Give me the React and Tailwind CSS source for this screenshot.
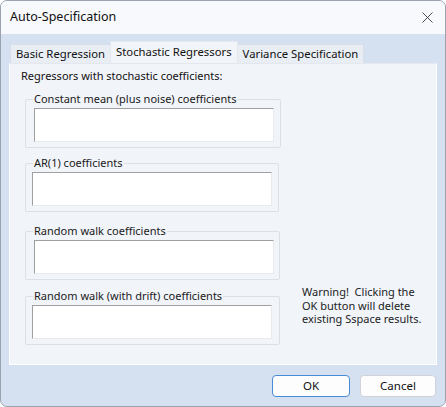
import { X } from 'lucide-react';

const groups = [
    { label: 'Constant mean (plus noise) coefficients', w: 'w-[256px]', box: 'ml-[8px]', mt: 'mt-[15px]' },
    { label: 'AR(1) coefficients', w: 'w-[254px]', box: 'ml-[6px]', mt: 'mt-[15px]' },
    { label: 'Random walk coefficients', w: 'w-[255px]', box: 'ml-[8px]', mt: 'mt-[19px]' },
    { label: 'Random walk (with drift) coefficients', w: 'w-[255px]', box: 'ml-[6px]', mt: 'mt-[16px]' },
];

const GroupBox = ({ label, w, box, mt }) => (
    <div className={`${w} ${mt} h-[49px] border border-[#dcdfe4] rounded-[2px] relative`}>
        <span className="absolute -top-[9px] left-[7px] px-[1px] bg-[#f1f4f9] leading-[16px] text-[#1a1a1a] whitespace-nowrap">{label}</span>
        <div className={`${box} mt-[8px] w-[240px] h-[34px] bg-white border-t border-l border-[#a0a0a0] border-b border-r border-b-[#e8eaee] border-r-[#e8eaee]`}></div>
    </div>
);

const App = () => {
    return (
        <div className="w-[446px] h-[407px] bg-white text-[11px] text-[#111]" style={{ fontFamily: '"Noto Sans", "Open Sans", sans-serif' }}>
            <div className="w-full h-full rounded-[7px] border border-[#9aa3ae] overflow-hidden flex flex-col bg-[#d5e1f0]">
                {/* title bar */}
                <div className="h-[33px] bg-[#f7f9fc] flex items-center justify-between pl-[9px] pr-[8px]">
                    <span className="text-[12.5px] text-[#111]">Auto-Specification</span>
                    <X size={19} strokeWidth={1.1} className="text-[#333]" />
                </div>

                {/* tabs */}
                <div className="flex items-end pl-[9px] mt-[7px] h-[22px] text-[11.3px]">
                    <div className="h-[19px] px-[5px] bg-[#e9eef5] border border-[#d8dee8] border-b-0 flex items-center">Basic Regression</div>
                    <div className="h-[22px] px-[5px] bg-[#f1f4f9] border border-[#e4e8ee] border-b-0 flex items-center -mx-[1px] relative">Stochastic Regressors</div>
                    <div className="h-[19px] px-[5px] bg-[#e9eef5] border border-[#d8dee8] border-b-0 flex items-center">Variance Specification</div>
                </div>

                {/* tab page */}
                <div className="mx-[8px] w-[428px] h-[302px] bg-[#f1f4f9] border border-white border-t-[#e4e8ee] flex flex-col pl-[11px]">
                    <div className="mt-[4px] leading-[16px]">Regressors with stochastic coefficients:</div>
                    <div className="flex">
                        <div className="flex flex-col ml-[4px]">
                            {groups.map((g) => (
                                <GroupBox key={g.label} {...g} />
                            ))}
                        </div>
                        <div className="ml-[21px] mt-[201px] leading-[13.5px] text-[#222]">
                            Warning!&nbsp; Clicking the<br />
                            OK button will delete<br />
                            existing Sspace results.
                        </div>
                    </div>
                </div>

                {/* buttons */}
                <div className="flex justify-end gap-[10px] pr-[9px] mt-[10px] text-[11.5px]">
                    <button className="w-[78px] h-[22px] bg-[#fdfdfd] border border-[#4a8bd6] rounded-[4px] text-[#111]">OK</button>
                    <button className="w-[76px] h-[22px] bg-[#fdfdfd] border border-[#d0d4da] rounded-[4px] text-[#111]">Cancel</button>
                </div>
            </div>
        </div>
    );
};

export default App;
